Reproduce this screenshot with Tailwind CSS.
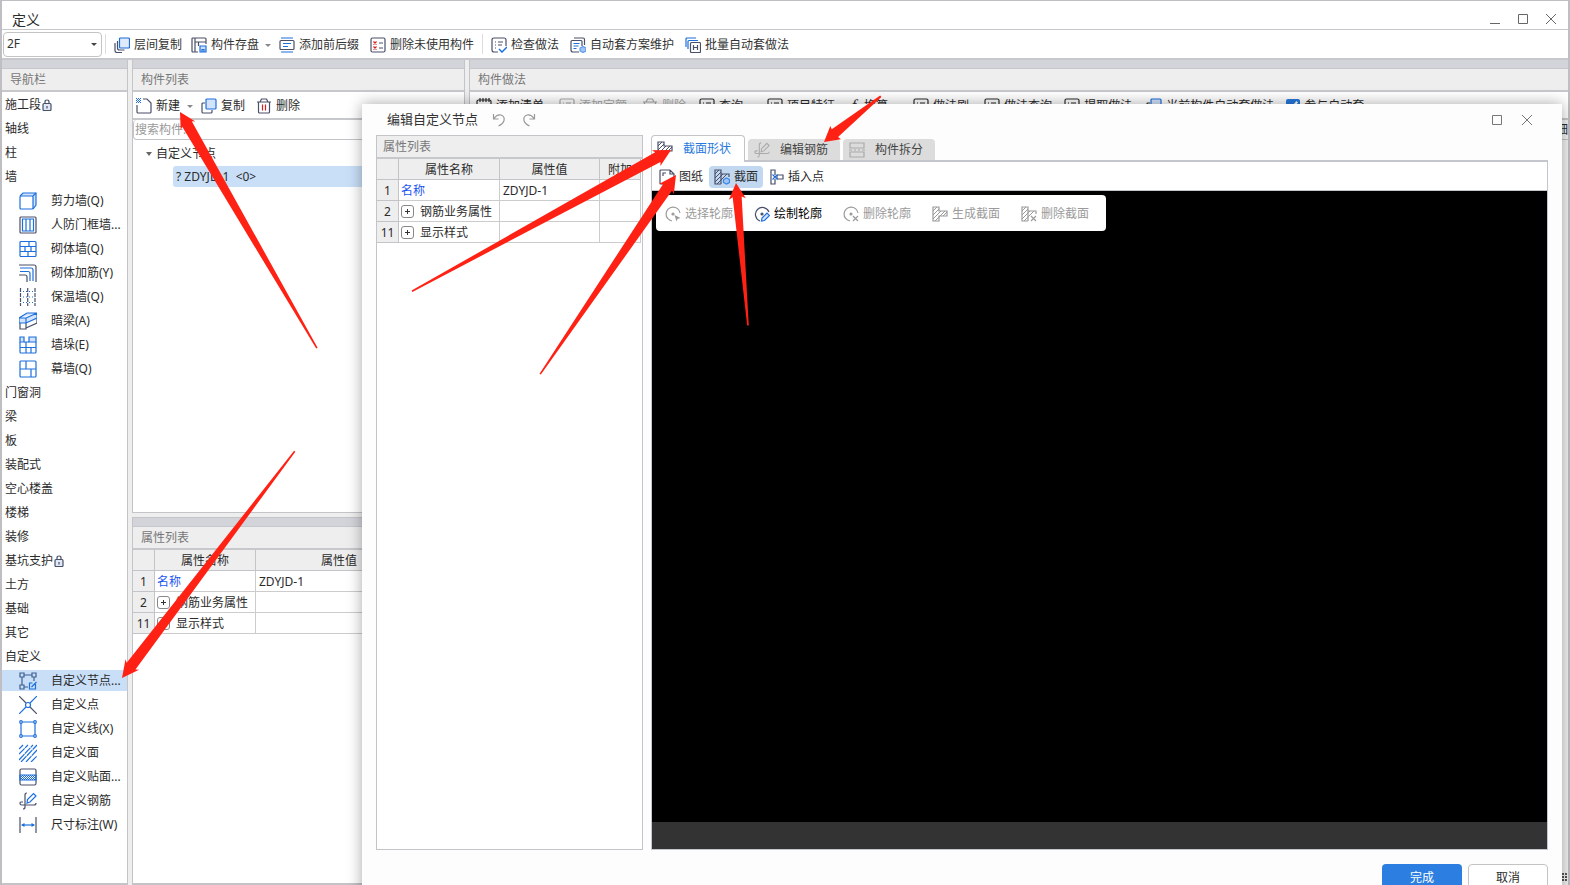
<!DOCTYPE html>
<html lang="zh-CN">
<head>
<meta charset="utf-8">
<meta name="viewport" content="width=device-width, initial-scale=1">
<title>定义</title>
<script src="https://cdn.jsdelivr.net/npm/@tailwindcss/browser@4"></script>
</head>
<body class="h-screen overflow-hidden bg-white font-['Noto_Sans','Noto_Sans_CJK_SC',sans-serif] text-xs text-[#2b2b2b]">

<svg class="absolute size-0" aria-hidden="true">
  <defs>
    <pattern id="dots" width="2" height="2" patternUnits="userSpaceOnUse"><path d="M0 0h1v1h-1zM1 1h1v1h-1z" fill="#1d6fdc"/></pattern>
  </defs>
  <symbol id="layers" viewBox="0 0 16 16"><path d="M1 6v7.500q0 2 2 2h5M3.500 4v7q0 2 2 2h5"/><rect x="5.500" y="1" width="10" height="10" rx="1" fill="#dfebfb" stroke="#1d6fdc"/></symbol>
  <symbol id="store" viewBox="0 0 16 16"><path d="M7 15H2Q1 15 1 14V2Q1 1 2 1h12q1 0 1 1v5M4 1v14M4 5h11M7.500 5v4"/><path d="M9 9h6v6H9z" fill="#cfe0f8" stroke="#1d6fdc"/><path d="M11 15v-2.500h2V15" stroke="#1d6fdc"/></symbol>
  <symbol id="affix" viewBox="0 0 16 16"><rect x="1" y="3.500" width="14" height="9" rx="1"/><path d="M2 1h12M2 15h12M4 6.500h8M4 9.500h5" stroke="#1d6fdc"/></symbol>
  <symbol id="unused" viewBox="0 0 16 16"><rect x="1" y="1" width="14" height="14" rx="1.500"/><path d="M9 6h4M9 11h4"/><path d="M3.500 4.500l3 3m0-3l-3 3M3.500 9.500l3 3m0-3l-3 3" stroke="#d81e1e"/></symbol>
  <symbol id="check" viewBox="0 0 16 16"><path d="M7 15H3q-2 0-2-2V3q0-2 2-2h10q2 0 2 2v6M4 5h1M7 5h5M4 8h1M7 8h4M4 11h1"/><path d="M8 12l3 3 5-5" stroke="#1d6fdc" stroke-width="1.500"/></symbol>
  <symbol id="scheme" viewBox="0 0 16 16"><path d="M9 15H3q-2 0-2-2V4.500q0-1 1-1h9q1 0 1 1V9M4 1h9q1.500 0 1.500 1.500V8"/><path d="M3.500 6.500h6M3.500 9h5M3.500 11.500h3" stroke="#1d6fdc"/><path d="M13 9.500l3 1.500v3l-3 1.500-3-1.500v-3z" fill="#9fc3f3" stroke="#5d9bea"/></symbol>
  <symbol id="batch" viewBox="0 0 16 16"><path d="M1 10V2Q1 1 2 1h9M3 12V4.500q0-1 1-1h9" stroke="#1d6fdc"/><rect x="5.500" y="5.500" width="10" height="10" rx="1"/><path d="M8.500 8v5M12.500 8v5M8.500 10.500h4"/></symbol>
  <symbol id="new" viewBox="0 0 16 16"><path d="M1 7v7q0 1 1 1h12q1 0 1-1V5l-4-4H7"/><path d="M0 0h5v5H0z" fill="url(#dots)" stroke="none"/></symbol>
  <symbol id="copy" viewBox="0 0 16 16"><path d="M4 5H2Q1 5 1 6v8q0 1 1 1h8q1 0 1-1v-2"/><rect x="5" y="1" width="10" height="10" rx="1" fill="#d3e3fb" stroke="#1d6fdc"/></symbol>
  <symbol id="trash" viewBox="0 0 16 16"><path d="M1 4h14M4 4l1.500-3h5L12 4M2.500 4v10q0 1 1 1h9q1 0 1-1V4"/><path d="M6.500 6.500v6M9.500 6.500v6" stroke="#d81e1e"/></symbol>
  <symbol id="trashg" viewBox="0 0 16 16"><path d="M1 4h14M4 4l1.500-3h5L12 4M2.500 4v10q0 1 1 1h9q1 0 1-1V4M6.500 6.500v6M9.500 6.500v6"/></symbol>
  <symbol id="lines" viewBox="0 0 16 16"><rect x="1" y="1" width="14" height="14" rx="1.500"/><path d="M4 5h1M7 5h5M4 8h1M7 8h5M4 11h1M7 11h5"/></symbol>
  <symbol id="pad" viewBox="0 0 16 16"><rect x="1" y="2" width="14" height="13" rx="1.500"/><path d="M4 0v4M7 0v4M10 0v4M13 0v4M4 8h8M4 11h8"/></symbol>
  <symbol id="lock" viewBox="0 0 10 12"><rect x="1" y="4.500" width="8" height="7" rx="1" fill="#e1e8f5"/><path d="M3 4.500V3q0-2 2-2t2 2v1.500M5 7v2.500"/></symbol>
  <symbol id="hatched" viewBox="0 0 16 16"><path d="M1 1h6v4h8v5H7v5H1z"/><path d="M1 5l4-4M1 9l6-6M1 13l8-8M3 15L13 5M11 10l4-4" stroke-width="1"/></symbol>
  <symbol id="hatchgear" viewBox="0 0 16 16"><path d="M7 15H1V1h6v4h8v3M7 5v10"/><path d="M1 5l4-4M1 9l6-6M1 13l8-8M3 15L13 5" stroke-width="1"/><path d="M12.500 9l3 1.500v3l-3 1.500-3-1.500v-3z" fill="#9fc3f3" stroke="#3b86e6"/></symbol>
  <symbol id="hatchx" viewBox="0 0 16 16"><path d="M7 15H1V1h6v4h8v3M7 5v10"/><path d="M1 5l4-4M1 9l6-6M1 13l8-8M3 15L13 5" stroke-width="1"/><path d="M10 10l5 5m0-5l-5 5"/></symbol>
  <symbol id="rebar" viewBox="0 0 18 18"><path d="M8 1q-2 0-2 2v12q0 2-2 2M4 10H2q-1 0-1 1.500T3 13h12q2 0 2-2"/><path d="M8 11l.5-3.500L14.500 1.500l2.500 2.500L11 10z" stroke="var(--a,currentColor)"/></symbol>
  <symbol id="split" viewBox="0 0 16 16"><path d="M1 1h14v5H1zM1 10h14v5H1zM0 8h3M5 8h2M9 8h2M13 8h3"/></symbol>
  <symbol id="sheet" viewBox="0 0 16 16"><path d="M11 1H2Q1 1 1 2v12q0 1 1 1h12q1 0 1-1V5zM11 1v4h4M4 7V4h3"/></symbol>
  <symbol id="insert" viewBox="0 0 14 16"><path d="M5 6V1H1v14h4v-5M7 6v4M7 6h6v4H7"/><path d="M2.500 5.500l5 5m0-5l-5 5" stroke="#1d6fdc"/></symbol>
  <symbol id="csel" viewBox="0 0 16 16"><path d="M7 15A7 7 0 1 1 15 7"/><circle cx="8" cy="8" r="1" fill="currentColor"/><path d="M9.500 9l6 3-3 1-1 2.500z" fill="currentColor" stroke="none"/></symbol>
  <symbol id="cdraw" viewBox="0 0 16 16"><path d="M6 15A7 7 0 1 1 15 6"/><circle cx="8" cy="8" r="1" fill="currentColor"/><path d="M7.500 15l.5-3 5-5 2.500 2.500-5 5z" fill="#d3e3fb" stroke="#1d6fdc"/></symbol>
  <symbol id="cdel" viewBox="0 0 16 16"><path d="M7 15A7 7 0 1 1 15 7"/><circle cx="8" cy="8" r="1" fill="currentColor"/><path d="M10 10l5 5m0-5l-5 5"/></symbol>
</svg>

<div class="relative flex h-full flex-col border-x-2 border-t border-[#bfbfc3] [&_svg:has(use)]:fill-none [&_svg:has(use)]:stroke-current [&_svg:has(use)]:[stroke-width:1.2]">
  <header class="flex h-[29px] shrink-0 items-center justify-between border-b border-[#c6c8cc] pr-3 pl-[10px]">
    <h1 class="pt-[10px] text-sm">定义</h1>
    <div class="flex gap-[18px] pt-2 text-[#666]">
      <button aria-label="最小化"><svg class="size-[10px]" viewBox="0 0 10 10"><path d="M0 9.500h10" stroke="currentColor"/></svg></button>
      <button aria-label="最大化"><svg class="size-[10px]" viewBox="0 0 10 10"><path d="M.5.5h9v9h-9z" fill="none" stroke="currentColor"/></svg></button>
      <button aria-label="关闭"><svg class="size-[10px]" viewBox="0 0 10 10"><path d="M0 0l10 10M10 0L0 10" stroke="currentColor"/></svg></button>
    </div>
  </header>

  <div class="flex h-[30px] shrink-0 items-center border-b-2 border-[#c6c8cc] pl-px whitespace-nowrap text-[#333] [&_svg]:text-[#4a5068] [&>button]:pt-[2px]">
    <div class="relative">
      <select aria-label="楼层" class="block h-[25px] w-[99px] appearance-none rounded border border-[#c4c4c4] bg-white pl-[3px] text-xs"><option>2F</option></select>
      <span class="pointer-events-none absolute top-[11px] right-[5px] border-x-[3px] border-t-[3px] border-x-transparent border-t-[#444]"></span>
    </div>
    <span class="mr-2 ml-[3px] h-5 w-px bg-[#ddd]"></span>
    <button class="flex items-center gap-1"><svg class="size-4"><use href="#layers"/></svg>层间复制</button>
    <button class="ml-[9px] flex items-center gap-1"><svg class="size-4"><use href="#store"/></svg>构件存盘<span class="ml-[2px] border-x-[3px] border-t-[3px] border-x-transparent border-t-[#888]"></span></button>
    <button class="ml-2 flex items-center gap-1"><svg class="size-4"><use href="#affix"/></svg>添加前后缀</button>
    <button class="ml-[11px] flex items-center gap-1"><svg class="size-4"><use href="#unused"/></svg>删除未使用构件</button>
    <span class="mx-2 h-5 w-px bg-[#ddd]"></span>
    <button class="flex items-center gap-1"><svg class="size-4"><use href="#check"/></svg>检查做法</button>
    <button class="ml-[11px] flex items-center gap-1"><svg class="size-4"><use href="#scheme"/></svg>自动套方案维护</button>
    <button class="ml-[11px] flex items-center gap-1"><svg class="size-4"><use href="#batch"/></svg>批量自动套做法</button>
  </div>

  <div class="flex min-h-0 flex-1 bg-[#eee]">
    <!-- navigation -->
    <aside class="flex w-[126px] shrink-0 flex-col border-r border-b-2 border-[#c3c4c8] bg-white">
      <div class="h-[9px] shrink-0 border-b border-[#c6c8cc] bg-[#d3d4da]"></div>
      <h2 class="flex h-[23px] shrink-0 items-center border-b-2 border-[#c6c8cc] bg-[#eee] pl-2 text-[#777]">导航栏</h2>
      <ul class="flex flex-col gap-[3px] pt-[2px] whitespace-nowrap [&>li]:flex [&>li]:h-[21px] [&>li]:items-center [&>li]:pl-[3px] [&>li>svg]:mr-[14px] [&>li>svg]:ml-[14px] [&>li>svg]:size-[18px] [&>li>svg]:shrink-0">
        <li>施工段<span class="ml-px text-[#4a5068]"><svg class="h-3 w-[10px]"><use href="#lock"/></svg></span></li>
        <li>轴线</li><li>柱</li><li>墙</li>
        <li><svg viewBox="0 0 18 18" fill="none" stroke="#1d6fdc" stroke-width="1.200"><path d="M1 4l3-3h13v12l-3 4" fill="#d3e3fb"/><rect x="1" y="4" width="13" height="13" rx="1" fill="#fff"/><path d="M14 4l3-3"/></svg>剪力墙(Q)</li>
        <li><svg viewBox="0 0 18 18" fill="none" stroke="#4a5068" stroke-width="1.200"><rect x="1" y="1" width="16" height="16" rx="1"/><path d="M3.500 3h11v12h-11zM7 3v12M11 3v12" stroke="#1d6fdc"/></svg>人防门框墙...</li>
        <li><svg viewBox="0 0 18 18" fill="none" stroke="#1d6fdc" stroke-width="1.200"><rect x="1" y="1.500" width="16" height="15" rx="1"/><path d="M1 6.500h16M1 11.500h16M10 1.500v5M6 6.500v5M12 6.500v5M9 11.500v5"/></svg>砌体墙(Q)</li>
        <li><svg viewBox="0 0 18 18" fill="none" stroke="#4a5068" stroke-width="1.200"><path d="M0 1h15q2 0 2 2v15M0 11h6q2 0 2 2v5"/><path d="M1 4h11q2 0 2 2v11M1 7.500h8q2 0 2 2V17" stroke="#1d6fdc"/></svg>砌体加筋(Y)</li>
        <li><svg viewBox="0 0 18 18" fill="none" stroke="#4a5068" stroke-width="1.200"><path d="M1.500 0v18M16 0v18M8.700 0v18" stroke-dasharray="4 1"/><path d="M4 3.500h10M4 9h10M4 14.500h10" stroke="#1d6fdc" stroke-dasharray="1 2"/></svg>保温墙(Q)</li>
        <li><svg viewBox="0 0 18 18" fill="none" stroke="#4a5068" stroke-width="1.200"><path d="M1 10v7h6v-6M7 16l11-5V7"/><path d="M0 6l8-5h10v5l-11 5H0zM0 6h7l11-5M7 6v5" fill="#d3e3fb" stroke="#1d6fdc"/></svg>暗梁(A)</li>
        <li><svg viewBox="0 0 18 18" fill="none" stroke="#1d6fdc" stroke-width="1.200"><path d="M1 1h4v5H1zM10 1h7v5h-7z" fill="#d3e3fb"/><path d="M1 6v10q0 1 1 1h14q1 0 1-1V6M5 6h5M1 11.500h16M7 6v11M12 11.500V17"/></svg>墙垛(E)</li>
        <li><svg viewBox="0 0 18 18" fill="none" stroke="#1d6fdc" stroke-width="1.200"><rect x="1" y="1" width="16" height="16" rx="1"/><path d="M1 9h16M7 1v8M12 9v8"/></svg>幕墙(Q)</li>
        <li>门窗洞</li><li>梁</li><li>板</li><li>装配式</li><li>空心楼盖</li><li>楼梯</li><li>装修</li>
        <li>基坑支护<span class="ml-px text-[#4a5068]"><svg class="h-3 w-[10px]"><use href="#lock"/></svg></span></li>
        <li>土方</li><li>基础</li><li>其它</li><li>自定义</li>
        <li class="bg-[#c9dff8]"><svg viewBox="0 0 18 18" fill="none" stroke="#3d5f91" stroke-width="1.200"><path d="M1 1h4v4H1zM13 1h4v4h-4zM1 13h4v4H1zM5 3h8M3 5v8M15 5v4M5 15h4"/><path d="M16.500 12v5h-6v-6h3M12.500 15l5-5" stroke="#1d6fdc"/></svg>自定义节点...</li>
        <li><svg viewBox="0 0 18 18" fill="none" stroke="#1d6fdc" stroke-width="1.200"><path d="M0 0l7 7M11 11l7 7" stroke="#4a5068"/><path d="M18 0l-7 7M7 11l-7 7"/><circle cx="9" cy="9" r="2.500"/></svg>自定义点</li>
        <li><svg viewBox="0 0 18 18" fill="#fff" stroke="#1d6fdc" stroke-width="1.200"><path d="M2 2h14v14H2z"/><circle cx="2" cy="2" r="1.300"/><circle cx="16" cy="2" r="1.300"/><circle cx="2" cy="16" r="1.300"/><circle cx="16" cy="16" r="1.300"/></svg>自定义线(X)</li>
        <li><svg viewBox="0 0 18 18" fill="none" stroke="#1d6fdc" stroke-width="1.200"><path d="M0 5l4-4M0 10l9-9M0 16L14 1M2 18L18 1M7 18L18 6M12 18l6-6" stroke-dasharray="8 .6"/></svg>自定义面</li>
        <li><svg viewBox="0 0 18 18" fill="none" stroke="#4a5068" stroke-width="1.200"><rect x="1" y="1" width="16" height="16" rx="1.500"/><path d="M1 7h16v5H1z" fill="url(#dots)" stroke="#1d6fdc"/></svg>自定义贴面...</li>
        <li class="[--a:#1d6fdc]"><svg class="text-[#4a5068]"><use href="#rebar"/></svg>自定义钢筋</li>
        <li><svg viewBox="0 0 18 18" fill="none" stroke="#4a5068" stroke-width="1.200"><path d="M1 1v16M17 1v16"/><path d="M3 9h12" stroke="#1d6fdc"/><path d="M2 9l3.500-2v4zM16 9l-3.500-2v4z" fill="#1d6fdc" stroke="none"/></svg>尺寸标注(W)</li>
      </ul>
    </aside>

    <!-- component list and its properties -->
    <div class="ml-1 flex w-[333px] shrink-0 flex-col gap-1">
      <section class="flex h-[453px] shrink-0 flex-col border-x border-b border-[#c3c4c8] bg-white">
        <div class="h-[9px] shrink-0 border-b border-[#c6c8cc] bg-[#d3d4da]"></div>
        <h2 class="flex h-[23px] shrink-0 items-center border-b-2 border-[#c6c8cc] bg-[#eee] pl-2 text-[#777]">构件列表</h2>
        <div class="flex h-7 shrink-0 items-center border-b-2 border-[#c6c8cc] pt-[2px] pl-[3px] [&_svg]:text-[#4a5068]">
          <button class="flex items-center gap-1"><svg class="size-4"><use href="#new"/></svg>新建<span class="ml-[3px] border-x-[3px] border-t-[3px] border-x-transparent border-t-[#888]"></span></button>
          <button class="ml-2 flex items-center gap-1"><svg class="size-4"><use href="#copy"/></svg>复制</button>
          <button class="ml-[11px] flex items-center gap-1"><svg class="size-4"><use href="#trash"/></svg>删除</button>
        </div>
        <input type="text" aria-label="搜索构件" placeholder="搜索构件..." class="block h-5 shrink-0 rounded-sm border-b border-l border-[#c3c4c8] pl-px text-xs placeholder:text-[#999]">
        <div class="pt-[3px] pl-[13px]">
          <div class="flex h-[21px] items-center gap-1"><span class="border-x-[3px] border-t-[4px] border-x-transparent border-t-[#666]"></span>自定义节点</div>
          <div class="mt-[2px] ml-[27px] flex h-[21px] items-center rounded-l-[3px] bg-[#c9dff8] pl-[3px] whitespace-pre">? ZDYJD-1  &lt;0&gt;</div>
        </div>
      </section>
      <section class="flex min-h-0 flex-1 flex-col border border-b-2 border-[#c3c4c8] bg-white">
        <div class="h-[9px] shrink-0 border-b border-[#c6c8cc] bg-[#d3d4da]"></div>
        <h2 class="flex h-[23px] shrink-0 items-center border-b-2 border-[#c6c8cc] bg-[#eee] pl-2 text-[#777]">属性列表</h2>
        <table class="w-full table-fixed border-separate border-spacing-0 [&_td]:h-[21px] [&_td]:border-r [&_td]:border-b [&_td]:border-[#ccc] [&_td]:p-0 [&_td]:pt-px [&_th]:h-[21px] [&_th]:border-r [&_th]:border-b [&_th]:border-[#c3c4c8] [&_th]:bg-[#eee] [&_th]:p-0 [&_th]:pt-px [&_th]:font-normal">
          <colgroup><col class="w-[22px]"><col class="w-[101px]"><col class="w-[167px]"><col></colgroup>
          <tr><th></th><th>属性名称</th><th>属性值</th><th>附加</th></tr>
          <tr><th>1</th><td><span class="pl-[2px] text-[#1a56f0]">名称</span></td><td><span class="pl-[3px]">ZDYJD-1</span></td><td></td></tr>
          <tr><th>2</th><td><span class="flex items-center gap-[6px] pl-[2px]"><button aria-label="展开" class="flex size-[13px] items-center justify-center rounded-[3px] border border-[#888]"><svg class="size-[5px]" viewBox="0 0 5 5"><path d="M0 2.500h5M2.500 0v5" stroke="#333"/></svg></button>钢筋业务属性</span></td><td></td><td></td></tr>
          <tr><th>11</th><td><span class="flex items-center gap-[6px] pl-[2px]"><button aria-label="展开" class="flex size-[13px] items-center justify-center rounded-[3px] border border-[#888]"><svg class="size-[5px]" viewBox="0 0 5 5"><path d="M0 2.500h5M2.500 0v5" stroke="#333"/></svg></button>显示样式</span></td><td></td><td></td></tr>
        </table>
      </section>
    </div>

    <!-- construction methods -->
    <section class="ml-1 flex min-w-0 flex-1 flex-col border-l border-[#c3c4c8] bg-[#f3f3f3]">
      <div class="h-[9px] shrink-0 border-b border-[#c6c8cc] bg-[#d3d4da]"></div>
      <h2 class="flex h-[23px] shrink-0 items-center border-b-2 border-[#c6c8cc] bg-[#eee] pl-2 text-[#777]">构件做法</h2>
      <div class="flex h-7 shrink-0 items-center border-b-2 border-[#c6c8cc] bg-white pt-[2px] pl-[6px] whitespace-nowrap [&>button]:flex [&>button]:items-center [&>button]:gap-1">
        <button><svg class="size-4"><use href="#pad"/></svg>添加清单</button>
        <button class="ml-[15px] text-[#aaa]"><svg class="size-4"><use href="#lines"/></svg>添加定额</button>
        <button class="ml-[15px] text-[#aaa]"><svg class="size-4"><use href="#trashg"/></svg>删除</button>
        <button class="ml-[13px]"><svg class="size-4"><use href="#lines"/></svg>查询</button>
        <button class="ml-6"><svg class="size-4"><use href="#lines"/></svg>项目特征</button>
        <button class="ml-[13px]"><i class="w-3 text-center font-['Liberation_Serif',serif] text-base">f</i>换算</button>
        <button class="ml-[25px]"><svg class="size-4"><use href="#lines"/></svg>做法刷</button>
        <button class="ml-[15px]"><svg class="size-4"><use href="#lines"/></svg>做法查询</button>
        <button class="ml-3"><svg class="size-4"><use href="#lines"/></svg>提取做法</button>
        <button class="ml-[14px]"><svg class="size-4"><use href="#copy"/></svg>当前构件自动套做法</button>
        <label class="ml-3 flex items-center gap-1"><input type="checkbox" checked class="size-[14px] accent-[#2779dd]">参与自动套</label>
      </div>
      <div class="flex h-5 shrink-0 items-center justify-end overflow-hidden border-b border-[#c3c4c8]">细</div>
      <div class="mt-auto self-end pb-1 text-[#555]"><svg class="h-2 w-[6px]" viewBox="0 0 6 8"><path d="M0 0h2v2H0zM3 0h2v2H3zM0 3h2v2H0zM3 3h2v2H3zM0 6h2v2H0zM3 6h2v2H3z" fill="currentColor"/></svg></div>
    </section>
  </div>

  <!-- dialog -->
  <div role="dialog" aria-label="编辑自定义节点" class="absolute top-[103px] right-[6px] -bottom-4 left-[360px] flex flex-col bg-[#fdfdfd] pr-[14px] pl-[14px] shadow-[0_0_14px_rgba(0,0,0,0.35)]">
    <div class="flex h-[31px] shrink-0 items-center pl-[11px] text-[#777]">
      <h2 class="text-[13px] text-[#333]">编辑自定义节点</h2>
      <button aria-label="撤销" class="ml-[14px]"><svg class="h-4 w-[14px]" viewBox="0 0 14 16" fill="none" stroke="#999" stroke-width="1.200"><path d="M1.500 2v5h5M2 6.500Q5 2 9 3q4 1.500 3 5.500-1 3.500-5.500 5.500"/></svg></button>
      <button aria-label="重做" class="ml-4"><svg class="h-4 w-[14px]" viewBox="0 0 14 16" fill="none" stroke="#999" stroke-width="1.200"><path d="M12.500 2v5h-5M12 6.500Q9 2 5 3 1 4.500 2 8.500 3 12 7.500 14"/></svg></button>
      <button aria-label="最大化" class="ml-auto"><svg class="size-[10px]" viewBox="0 0 10 10"><path d="M.5.5h9v9h-9z" fill="none" stroke="currentColor"/></svg></button>
      <button aria-label="关闭" class="mr-4 ml-5"><svg class="size-[10px]" viewBox="0 0 10 10"><path d="M0 0l10 10M10 0L0 10" stroke="currentColor"/></svg></button>
    </div>
    <div class="flex min-h-0 flex-1 gap-2">
      <section class="w-[267px] shrink-0 border border-[#c3c4c8] bg-white">
        <h3 class="flex h-[23px] items-center border-b-2 border-[#c6c8cc] bg-[#eee] pl-[6px] text-[#777]">属性列表</h3>
        <table class="w-[264px] table-fixed border-separate border-spacing-0 [&_td]:h-[21px] [&_td]:border-r [&_td]:border-b [&_td]:border-[#ccc] [&_td]:p-0 [&_td]:pt-px [&_th]:h-[21px] [&_th]:border-r [&_th]:border-b [&_th]:border-[#c3c4c8] [&_th]:bg-[#eee] [&_th]:p-0 [&_th]:pt-px [&_th]:font-normal">
          <colgroup><col class="w-[22px]"><col class="w-[101px]"><col class="w-[100px]"><col></colgroup>
          <tr><th></th><th>属性名称</th><th>属性值</th><th><span class="block pl-2 text-left">附加</span></th></tr>
          <tr><th>1</th><td><span class="pl-[2px] text-[#1a56f0]">名称</span></td><td><span class="pl-[3px]">ZDYJD-1</span></td><td></td></tr>
          <tr><th>2</th><td><span class="flex items-center gap-[6px] pl-[2px]"><button aria-label="展开" class="flex size-[13px] items-center justify-center rounded-[3px] border border-[#888]"><svg class="size-[5px]" viewBox="0 0 5 5"><path d="M0 2.500h5M2.500 0v5" stroke="#333"/></svg></button>钢筋业务属性</span></td><td></td><td></td></tr>
          <tr><th>11</th><td><span class="flex items-center gap-[6px] pl-[2px]"><button aria-label="展开" class="flex size-[13px] items-center justify-center rounded-[3px] border border-[#888]"><svg class="size-[5px]" viewBox="0 0 5 5"><path d="M0 2.500h5M2.500 0v5" stroke="#333"/></svg></button>显示样式</span></td><td></td><td></td></tr>
        </table>
      </section>

      <div class="flex min-w-0 flex-1 flex-col">
        <div role="tablist" class="flex h-[25px] shrink-0 items-end gap-[3px] [&>button]:flex [&>button]:items-center [&>button]:rounded-t">
          <button role="tab" aria-selected="true" class="z-10 -mb-[2px] h-[27px] w-[94px] gap-[10px] border border-b-0 border-[#c3c4c8] bg-white pl-[5px] text-[#2779dd]"><svg class="size-4 text-[#4a5068]"><use href="#hatched"/></svg>截面形状</button>
          <button role="tab" class="h-[21px] w-[92px] gap-[10px] bg-[#dcdcdc] pl-[6px] text-[#444]"><svg class="size-4 text-[#aaa]"><use href="#rebar"/></svg>编辑钢筋</button>
          <button role="tab" class="h-[21px] w-[92px] gap-[10px] bg-[#dcdcdc] pl-[6px] text-[#444]"><svg class="size-4 text-[#aaa]"><use href="#split"/></svg>构件拆分</button>
        </div>
        <div class="flex min-h-0 flex-1 flex-col border border-t-2 border-[#c3c6cc] bg-white">
          <div class="flex h-[29px] shrink-0 items-center border-b border-[#c3c6cc] pt-[2px] pl-[7px] [&_svg]:text-[#4a5068]">
            <button class="flex items-center gap-1"><svg class="size-4"><use href="#sheet"/></svg>图纸</button>
            <button class="ml-[6px] flex h-[22px] items-center gap-1 rounded bg-[#c1d8f0] px-[5px]"><svg class="size-4"><use href="#hatchgear"/></svg>截面</button>
            <button class="ml-[7px] flex items-center gap-1"><svg class="h-4 w-[14px]"><use href="#insert"/></svg>插入点</button>
          </div>
          <div class="min-h-0 flex-1 bg-black pt-1 pl-1">
            <div class="flex h-9 w-fit items-center gap-[21px] rounded bg-white pr-[17px] pl-[9px] text-[#9a9a9a] [&>button]:flex [&>button]:items-center [&>button]:gap-1 [&>button]:pt-px">
              <button><svg class="size-4"><use href="#csel"/></svg>选择轮廓</button>
              <button class="text-black"><svg class="size-4 text-[#4a5068]"><use href="#cdraw"/></svg>绘制轮廓</button>
              <button><svg class="size-4"><use href="#cdel"/></svg>删除轮廓</button>
              <button><svg class="size-4"><use href="#hatched"/></svg>生成截面</button>
              <button><svg class="size-4"><use href="#hatchx"/></svg>删除截面</button>
            </div>
          </div>
          <div class="h-[27px] shrink-0 bg-[#333]"></div>
        </div>
      </div>
    </div>
    <div class="flex h-[51px] shrink-0 justify-end gap-[6px] pt-[14px]">
      <button class="h-7 w-20 rounded bg-[#2c7fe0] text-white">完成</button>
      <button class="h-7 w-20 rounded border border-[#c4c4c4] bg-white">取消</button>
    </div>
  </div>
</div>

<!-- annotation arrows -->
<svg class="pointer-events-none absolute top-0 left-0 z-20 h-[400px] w-[900px] overflow-visible" fill="#ff2214" aria-hidden="true">
  <path transform="translate(180 112) rotate(-120.1)" d="M0 0L-16-8.500L-14-5.500L-273-.8V.8L-14 5.500L-16 8.500Z"/>
  <path transform="translate(122 678) rotate(127.300)" d="M0 0L-17-8.500L-15-5.500L-285-.8V.8L-15 5.500L-17 8.500Z"/>
  <path transform="translate(671 150) rotate(-28.600)" d="M0 0L-17-9L-15-5.500L-295-.8V.8L-15 5.500L-17 9Z"/>
  <path transform="translate(676 175) rotate(-55.700)" d="M0 0L-17-9L-15-5.500L-241-.8V.8L-15 5.500L-17 9Z"/>
  <path transform="translate(736 183) rotate(-94.800)" d="M0 0L-16-8.500L-14-4.500L-143-.8V.8L-14 4.500L-16 8.500Z"/>
  <path transform="translate(824 142) rotate(141.100)" d="M0 0L-15-8.500L-14-5L-73-1V1L-14 5L-15 8.500Z"/>
</svg>
</body>
</html>
